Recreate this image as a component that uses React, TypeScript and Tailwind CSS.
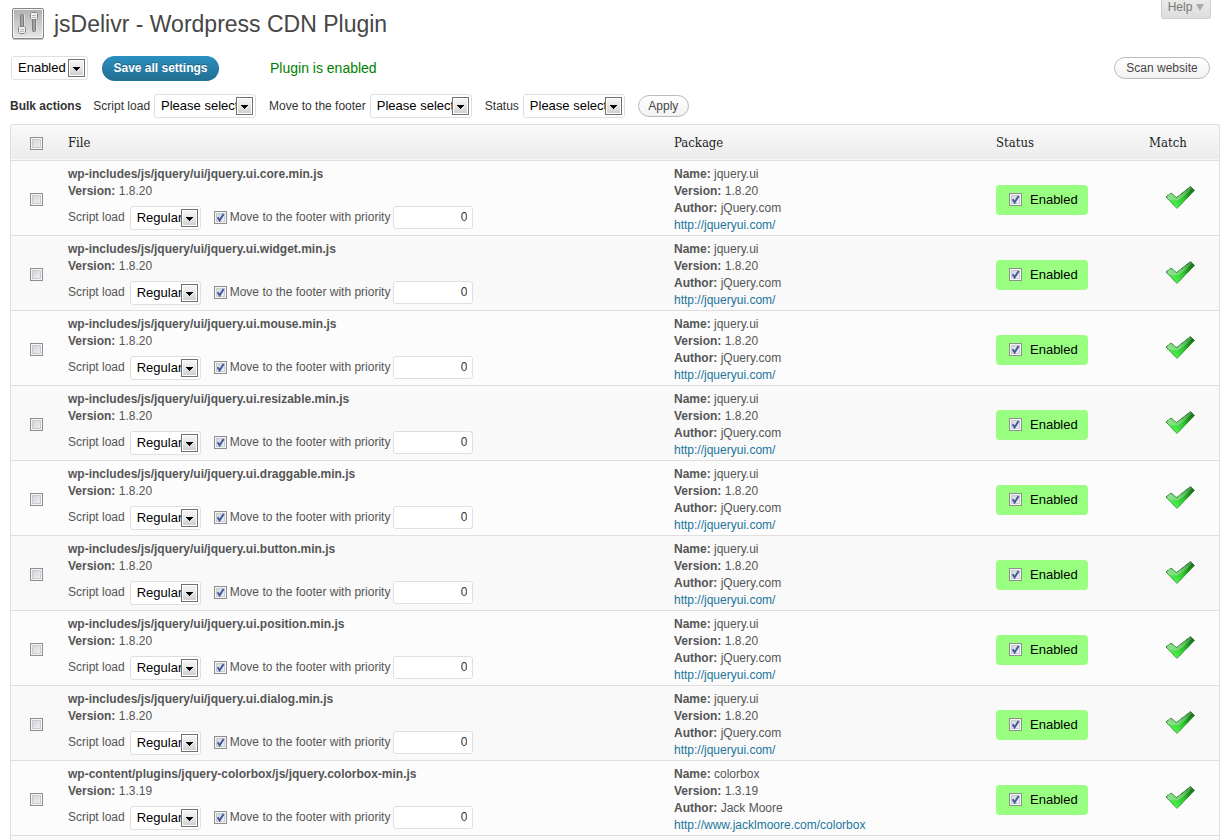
import { useId } from "react";

type Row = { file: string; name: string; version: string; author: string; url: string };

const ui = (part: string): Row => ({
  file: `wp-includes/js/jquery/ui/jquery.ui.${part}.min.js`,
  name: "jquery.ui",
  version: "1.8.20",
  author: "jQuery.com",
  url: "http://jqueryui.com/",
});

const rows: Row[] = [
  ...["core", "widget", "mouse", "resizable", "draggable", "button", "position", "dialog"].map(ui),
  {
    file: "wp-content/plugins/jquery-colorbox/js/jquery.colorbox-min.js",
    name: "colorbox",
    version: "1.3.19",
    author: "Jack Moore",
    url: "http://www.jacklmoore.com/colorbox",
  },
];

function Tick({ id, label, checked = false }: { id?: string; label?: string; checked?: boolean }) {
  return (
    <span className="relative block size-[13px] shrink-0">
      <input
        id={id}
        type="checkbox"
        aria-label={label}
        defaultChecked={checked}
        className="peer block size-[13px] appearance-none border border-[#8e8f8f] bg-linear-to-br from-[#cbcfd5] to-[#f6f6f6] shadow-[inset_0_0_0_1px_#f4f4f4,inset_0_0_0_2px_#c9ccd1]"
      />
      <svg
        viewBox="0 0 13 13"
        aria-hidden="true"
        className="pointer-events-none absolute inset-0 hidden size-[13px] peer-checked:block"
      >
        <path d="M3.6 6.3 L5.6 9.4 L9.6 2.9" fill="none" stroke="#4259a0" strokeWidth="2" />
      </svg>
    </span>
  );
}

function Select({ id, label, options, className }: { id?: string; label?: string; options: string[]; className: string }) {
  return (
    <span className={`relative block h-6 shrink-0 ${className}`}>
      <select
        id={id}
        aria-label={label}
        className="block h-6 w-full appearance-none rounded-[3px] border border-[#dfdfdf] bg-white pl-[6px] text-[13px] leading-5 text-black"
      >
        {options.map((o) => (
          <option key={o}>{o}</option>
        ))}
      </select>
      <svg viewBox="0 0 17 18" aria-hidden="true" className="pointer-events-none absolute top-[3px] right-[3px] h-[18px] w-[17px]">
        <defs>
          <linearGradient id="arrowFace" x1="0" y1="0" x2="0" y2="1">
            <stop offset="0" stopColor="#f4f4f4" />
            <stop offset="0.5" stopColor="#e6e6e6" />
            <stop offset="1" stopColor="#cfcfcf" />
          </linearGradient>
        </defs>
        <rect x="0.5" y="0.5" width="16" height="17" fill="#fff" stroke="#707070" />
        <rect x="2" y="2" width="13" height="14" fill="url(#arrowFace)" />
        <path d="M5 8h7v1h-1v1h-1v1h-1v1h-1v-1h-1v-1h-1v-1h-1z" fill="#000" />
      </svg>
    </span>
  );
}

function SettingsIcon() {
  return (
    <svg viewBox="0 0 32 32" aria-hidden="true" className="size-8 shrink-0">
      <defs>
        <linearGradient id="plate" x1="0" y1="0" x2="0" y2="1">
          <stop offset="0" stopColor="#b2b2b2" />
          <stop offset="1" stopColor="#e4e4e4" />
        </linearGradient>
      </defs>
      <rect x="0.5" y="0.5" width="31" height="30" rx="1.5" fill="#f4f4f4" stroke="#858585" />
      <path d="M1 31.5h30" stroke="#c4c4c4" />
      <rect x="2" y="2" width="28" height="27" fill="url(#plate)" />
      <rect x="8.5" y="6.5" width="3" height="13" rx="1" fill="#a2a2a2" stroke="#7c7c7c" />
      <path d="M12.500 6.500v12M24.500 12v12" stroke="#dedede" />
      <path d="M7.500 18.500h5l1 1v5l-1 1h-5l-1-1v-5z" fill="#f0f0f0" stroke="#868686" />
      <path d="M8 21.500h4M8 23.500h4" stroke="#b8b8b8" />
      <rect x="20.500" y="10.500" width="3" height="13" rx="1" fill="#a2a2a2" stroke="#7c7c7c" />
      <path d="M19.500 4.500h5l1 1v5l-1 1h-5l-1-1v-5z" fill="#f0f0f0" stroke="#868686" />
      <path d="M20 7.500h4M20 9.500h4" stroke="#b8b8b8" />
    </svg>
  );
}

function MatchIcon() {
  return (
    <svg viewBox="0 0 31 25" role="img" aria-label="Match" className="ml-4 block h-[25px] w-[31px]">
      <defs>
        <linearGradient id="tickFace" gradientUnits="userSpaceOnUse" x1="27" y1="3" x2="12" y2="23">
          <stop offset="0" stopColor="#1d6f1d" />
          <stop offset="0.25" stopColor="#16901a" />
          <stop offset="0.55" stopColor="#2cc42c" />
          <stop offset="1" stopColor="#4bf54b" />
        </linearGradient>
        <linearGradient id="tickShine" gradientUnits="userSpaceOnUse" x1="2" y1="10" x2="27" y2="4">
          <stop offset="0" stopColor="#a4dca4" stopOpacity="0.8" />
          <stop offset="1" stopColor="#a4dca4" stopOpacity="0.3" />
        </linearGradient>
      </defs>
      <path d="M1 12 L6 8 L11.500 12.500 L25.500 1.500 L29.500 5.500 L12 23.500 Z" fill="url(#tickFace)" />
      <path d="M1 12 L6 8 L11.500 12.500 L25.500 1.500 L27 3 Q20 12 12.500 15.500 Q7 15.500 3 14 Z" fill="url(#tickShine)" />
      <path
        d="M1 12 L6 8 L11.500 12.500 L25.500 1.500 L29.500 5.500 L12 23.500 Z"
        fill="none"
        stroke="#155f15"
        strokeWidth="1"
        strokeDasharray="1 0.6"
      />
    </svg>
  );
}

function BulkSelect({ label, options }: { label: string; options: string[] }) {
  const id = useId();
  return (
    <div className="flex items-center gap-1">
      <label htmlFor={id}>{label}</label>
      <Select id={id} options={["Please select", ...options]} className="w-[102px]" />
    </div>
  );
}

function FileRow({ row, even }: { row: Row; even: boolean }) {
  const id = useId();
  return (
    <tr className={`h-[75px] border-b border-[#dfdfdf] ${even ? "bg-[#f9f9f9]" : "bg-[#fcfcfc]"}`}>
      <td className="pt-1 pl-[19px] align-middle">
        <Tick label={`Select ${row.file}`} />
      </td>
      <td className="pt-[5px] pl-[10px] align-top">
        <div className="font-bold">{row.file}</div>
        <div>
          <b>Version:</b> {row.version}
        </div>
        <div className="mt-[6px] flex h-6 items-center">
          <label htmlFor={`${id}load`} className="mr-[5px] whitespace-nowrap">
            Script load
          </label>
          <Select id={`${id}load`} options={["Regular", "Async", "Defer"]} className="w-[71px]" />
          <label htmlFor={`${id}move`} className="ml-[13px] flex items-center gap-[3px] whitespace-nowrap">
            <Tick id={`${id}move`} checked />
            Move to the footer with priority
          </label>
          <input
            type="text"
            aria-label="Priority"
            defaultValue="0"
            className="ml-[3px] h-[23px] w-20 rounded-[3px] border border-[#dfdfdf] bg-white px-[5px] pb-px text-right text-[#333]"
          />
        </div>
      </td>
      <td className="pt-[5px] pb-px pl-[10px] align-top">
        <div>
          <b>Name:</b> {row.name}
        </div>
        <div>
          <b>Version:</b> {row.version}
        </div>
        <div>
          <b>Author:</b> {row.author}
        </div>
        <a href={row.url} className="block text-[#21759b]">
          {row.url}
        </a>
      </td>
      <td className="pt-1 pl-[10px] align-middle">
        <label className="flex h-[30px] w-[92px] items-center gap-2 rounded-[4px] bg-[#99ff80] pl-[13px] text-[13px] text-black">
          <Tick checked />
          Enabled
        </label>
      </td>
      <td className="pl-[10px] align-middle">
        <MatchIcon />
      </td>
    </tr>
  );
}

const heading = "pl-[10px] text-left font-normal";

export default function App() {
  return (
    <div className="bg-white pr-[6px] pl-[10px] font-['Liberation_Sans',Arial,sans-serif] text-[12px] leading-[17px] text-[#555]">
      <header className="flex h-12 items-start">
        <div className="flex flex-1 items-center gap-[10px] pt-2 pl-[2px]">
          <SettingsIcon />
          <h1 className="text-[23px] leading-8 text-[#464646]">jsDelivr - Wordpress CDN Plugin</h1>
        </div>
        <button className="mr-[9px] flex h-[19px] w-[50px] items-center justify-center gap-1 rounded-b-[3px] border border-t-0 border-[#ccc] bg-linear-to-b from-[#e9e9e9] to-[#dedede] pb-1 text-[#777]">
          Help
          <svg viewBox="0 0 8 7" aria-hidden="true" className="h-[7px] w-2">
            <path d="M0 0h8L4 7z" fill="#aaa" />
          </svg>
        </button>
      </header>

      <div className="flex h-10 items-center">
        <Select label="Plugin state" options={["Enabled", "Disabled"]} className="ml-px w-[77px]" />
        <button className="ml-[14px] h-[25px] w-[117px] rounded-full border border-[#21759b] border-t-[#2a8fbf] bg-linear-to-b from-[#2a8fbf] to-[#236f93] font-bold text-white text-shadow-[0_-1px_0_#0000004d]">
          Save all settings
        </button>
        <p className="ml-[51px] flex-1 text-[14px] text-[#008000]">Plugin is enabled</p>
        <button className="mr-[10px] h-[22px] w-24 rounded-full border border-[#bbb] bg-linear-to-b from-white to-[#f2f2f2] text-[#464646]">
          Scan website
        </button>
      </div>

      <div className="flex h-9 items-center text-[#333]">
        <b className="mr-3">Bulk actions</b>
        <div className="flex items-center gap-[13px]">
          <BulkSelect label="Script load" options={["Regular", "Async", "Defer"]} />
          <BulkSelect label="Move to the footer" options={["Yes", "No"]} />
          <BulkSelect label="Status" options={["Enabled", "Disabled"]} />
          <button className="h-[22px] w-[51px] rounded-full border border-[#bbb] bg-linear-to-b from-white to-[#f2f2f2] text-[#464646]">
            Apply
          </button>
        </div>
      </div>

      <div className="overflow-hidden rounded-t-[3px] border border-b-0 border-[#dfdfdf] bg-[#f9f9f9] pb-1">
        <table className="w-full table-fixed border-collapse">
          <colgroup>
            <col className="w-[47px]" />
            <col />
            <col className="w-[322px]" />
            <col className="w-[153px]" />
            <col className="w-20" />
          </colgroup>
          <thead>
            <tr className="h-[35px] border-b border-[#dfdfdf] bg-linear-to-b from-[#f9f9f9] to-[#ececec] font-['DejaVu_Serif_Condensed','DejaVu_Serif',serif] text-[13px] text-[#222]">
              <th className="pt-[2px] pl-[19px]">
                <Tick label="Select all files" />
              </th>
              <th className={heading}>File</th>
              <th className={heading}>Package</th>
              <th className={heading}>Status</th>
              <th className={heading}>Match</th>
            </tr>
          </thead>
          <tbody>
            {rows.map((row, i) => (
              <FileRow key={row.file} row={row} even={i % 2 === 1} />
            ))}
          </tbody>
        </table>
      </div>
    </div>
  );
}
